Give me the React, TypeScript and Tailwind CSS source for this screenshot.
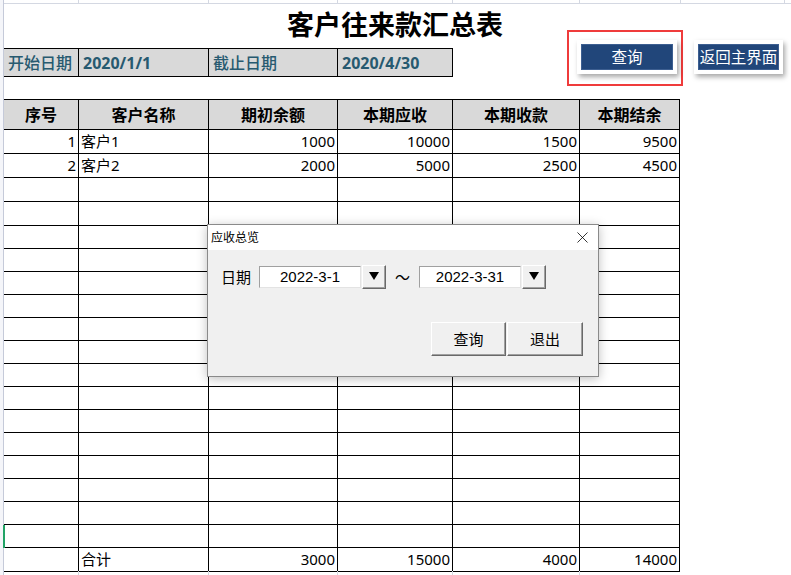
import { X } from "lucide-react"

const GRID = "grid grid-cols-[75px_130px_129px_115px_127px_100px]"
const CJK = "font-['Noto_Sans','Noto_Sans_CJK_SC',sans-serif]"

type Row = { no?: string; name?: string; open?: string; due?: string; paid?: string; bal?: string; h: string }

const rows: Row[] = [
  { no: "1", name: "客户1", open: "1000", due: "10000", paid: "1500", bal: "9500", h: "h-[24px]" },
  { no: "2", name: "客户2", open: "2000", due: "5000", paid: "2500", bal: "4500", h: "h-[24px]" },
  { h: "h-[24px]" },
  { h: "h-[24px]" },
  ...Array.from({ length: 14 }, () => ({ h: "h-[23px]" })),
  { name: "合计", open: "3000", due: "15000", paid: "4000", bal: "14000", h: "h-[23px]" },
]

function Num({ v }: { v?: string }) {
  return (
    <div className="flex items-center justify-end pr-[2px] border-r border-b border-black text-[15px] text-black">
      {v}
    </div>
  )
}

function SheetButton({ label, className }: { label: string; className: string }) {
  return (
    <div className={`absolute bg-white p-[4px] shadow-[2px_3px_5px_rgba(0,0,0,0.35)] ${className}`}>
      <div className="h-[26px] bg-[#21467a] border border-[#3d5f91] flex items-center justify-center text-white text-[15.5px] leading-none font-['Noto_Sans_CJK_SC',sans-serif]">
        {label}
      </div>
    </div>
  )
}

function Raised({ children, className }: { children: React.ReactNode; className: string }) {
  return (
    <div
      className={`flex items-center justify-center bg-[#f0f0f0] border border-t-white border-l-white border-r-[#696969] border-b-[#696969] shadow-[inset_-1px_-1px_0_#a0a0a0] ${className}`}
    >
      {children}
    </div>
  )
}

function DateBox({ value }: { value: string }) {
  return (
    <div className="flex items-center">
      <div className="w-[102px] h-[22px] bg-white border border-t-[#a0a0a0] border-l-[#a0a0a0] border-r-[#e3e3e3] border-b-[#e3e3e3] flex items-center justify-center text-[15px] text-black font-['Liberation_Sans',sans-serif]">
        {value}
      </div>
      <Raised className="w-[24px] h-[24px] ml-[1px]">
        <svg width="10" height="8" viewBox="0 0 10 8" className="-mt-[2px]">
          <path d="M0 0 H10 L5 8 Z" fill="#000" />
        </svg>
      </Raised>
    </div>
  )
}

function LightLines({ widths }: { widths: string[] }) {
  return (
    <>
      {widths.map((w, i) => (
        <div key={i} className={`${w} shrink-0 border-r border-[#d4d8e2]`} />
      ))}
    </>
  )
}

export default function App() {
  return (
    <div className={`relative w-[791px] h-[575px] overflow-hidden bg-white flex ${CJK}`}>
      {/* row header edge */}
      <div className="w-[4px] shrink-0 h-full bg-[#f4f5f9] border-r border-[#c5cad9]" />

      <div className="flex flex-col min-w-0 flex-1">
        {/* partial row above the title */}
        <div className="flex h-[4px] border-b border-[#d4d8e2]">
          <LightLines widths={["w-[75px]", "w-[130px]", "w-[129px]", "w-[115px]", "w-[127px]", "w-[101px]", "w-[104px]"]} />
        </div>

        {/* title */}
        <div className="h-[45px] pl-[283px] pt-[2px] flex items-start">
          <h1 className="text-[27px] font-bold leading-[36px] text-black font-['Noto_Sans_CJK_SC',sans-serif]">
            客户往来款汇总表
          </h1>
        </div>

        {/* date range */}
        <div className="flex border-t border-black w-[449px]">
          {[
            { t: "开始日期", w: "w-[75px]", b: false },
            { t: "2020/1/1", w: "w-[130px]", b: true },
            { t: "截止日期", w: "w-[129px]", b: false },
            { t: "2020/4/30", w: "w-[115px]", b: true },
          ].map((c) => (
            <div
              key={c.t}
              className={`${c.w} h-[28px] bg-[#d9d9d9] border-r border-b border-black flex items-center pl-[4px] text-[16px] text-[#275a70] ${c.b ? "font-bold" : "font-medium"}`}
            >
              {c.t}
            </div>
          ))}
        </div>

        <div className="h-[22px]" />

        {/* table */}
        <div className="border-t border-black w-[676px]">
          <div className={`${GRID} h-[30px] bg-[#d9d9d9] text-[16px] font-bold text-black`}>
            {["序号", "客户名称", "期初余额", "本期应收", "本期收款", "本期结余"].map((h) => (
              <div key={h} className="flex items-center justify-center border-r border-b border-black">
                {h}
              </div>
            ))}
          </div>
          {rows.map((r, i) => (
            <div key={i} className={`${GRID} ${r.h}`}>
              <Num v={r.no} />
              <div className="flex items-center pl-[2px] border-r border-b border-black text-[15px] text-black">
                {r.name}
              </div>
              <Num v={r.open} />
              <Num v={r.due} />
              <Num v={r.paid} />
              <Num v={r.bal} />
            </div>
          ))}
          <div className="flex h-[4px]">
            <LightLines widths={["w-[75px]", "w-[130px]", "w-[129px]", "w-[115px]", "w-[127px]"]} />
          </div>
        </div>
      </div>

      {/* active cell marker */}
      <div className="absolute left-[3px] top-[525px] w-[2px] h-[23px] bg-[#21a366]" />

      {/* floating sheet buttons */}
      <div className="absolute left-[567px] top-[30px] w-[116px] h-[56px] border-2 border-[#ef3b3b]" />
      <SheetButton label="查询" className="left-[577px] top-[40px] w-[100px]" />
      <SheetButton label="返回主界面" className="left-[694px] top-[40px] w-[89px]" />

      {/* dialog */}
      <div className="absolute left-[207px] top-[224px] w-[392px] h-[153px] border border-[#8a8a8a] bg-[#f0f0f0] shadow-[0_2px_10px_rgba(0,0,0,0.25)] flex flex-col">
        <div className="h-[25px] bg-white flex items-center justify-between pl-[3px] pr-[6px]">
          <span className="text-[12px] text-black">应收总览</span>
          <X size={19} strokeWidth={1} className="text-black" />
        </div>
        <div className="flex flex-col pl-[13px] pr-[15px] pt-[15px]">
          <div className="flex items-center">
            <span className="text-[15px] text-black w-[38px]">日期</span>
            <DateBox value="2022-3-1" />
            <span className="text-[15px] text-black w-[33px] text-center">～</span>
            <DateBox value="2022-3-31" />
          </div>
          <div className="flex justify-end mt-[33px]">
            <Raised className="w-[75px] h-[34px] text-[15px] text-black">查询</Raised>
            <Raised className="w-[76px] h-[34px] ml-[1px] text-[15px] text-black">退出</Raised>
          </div>
        </div>
      </div>
    </div>
  )
}
